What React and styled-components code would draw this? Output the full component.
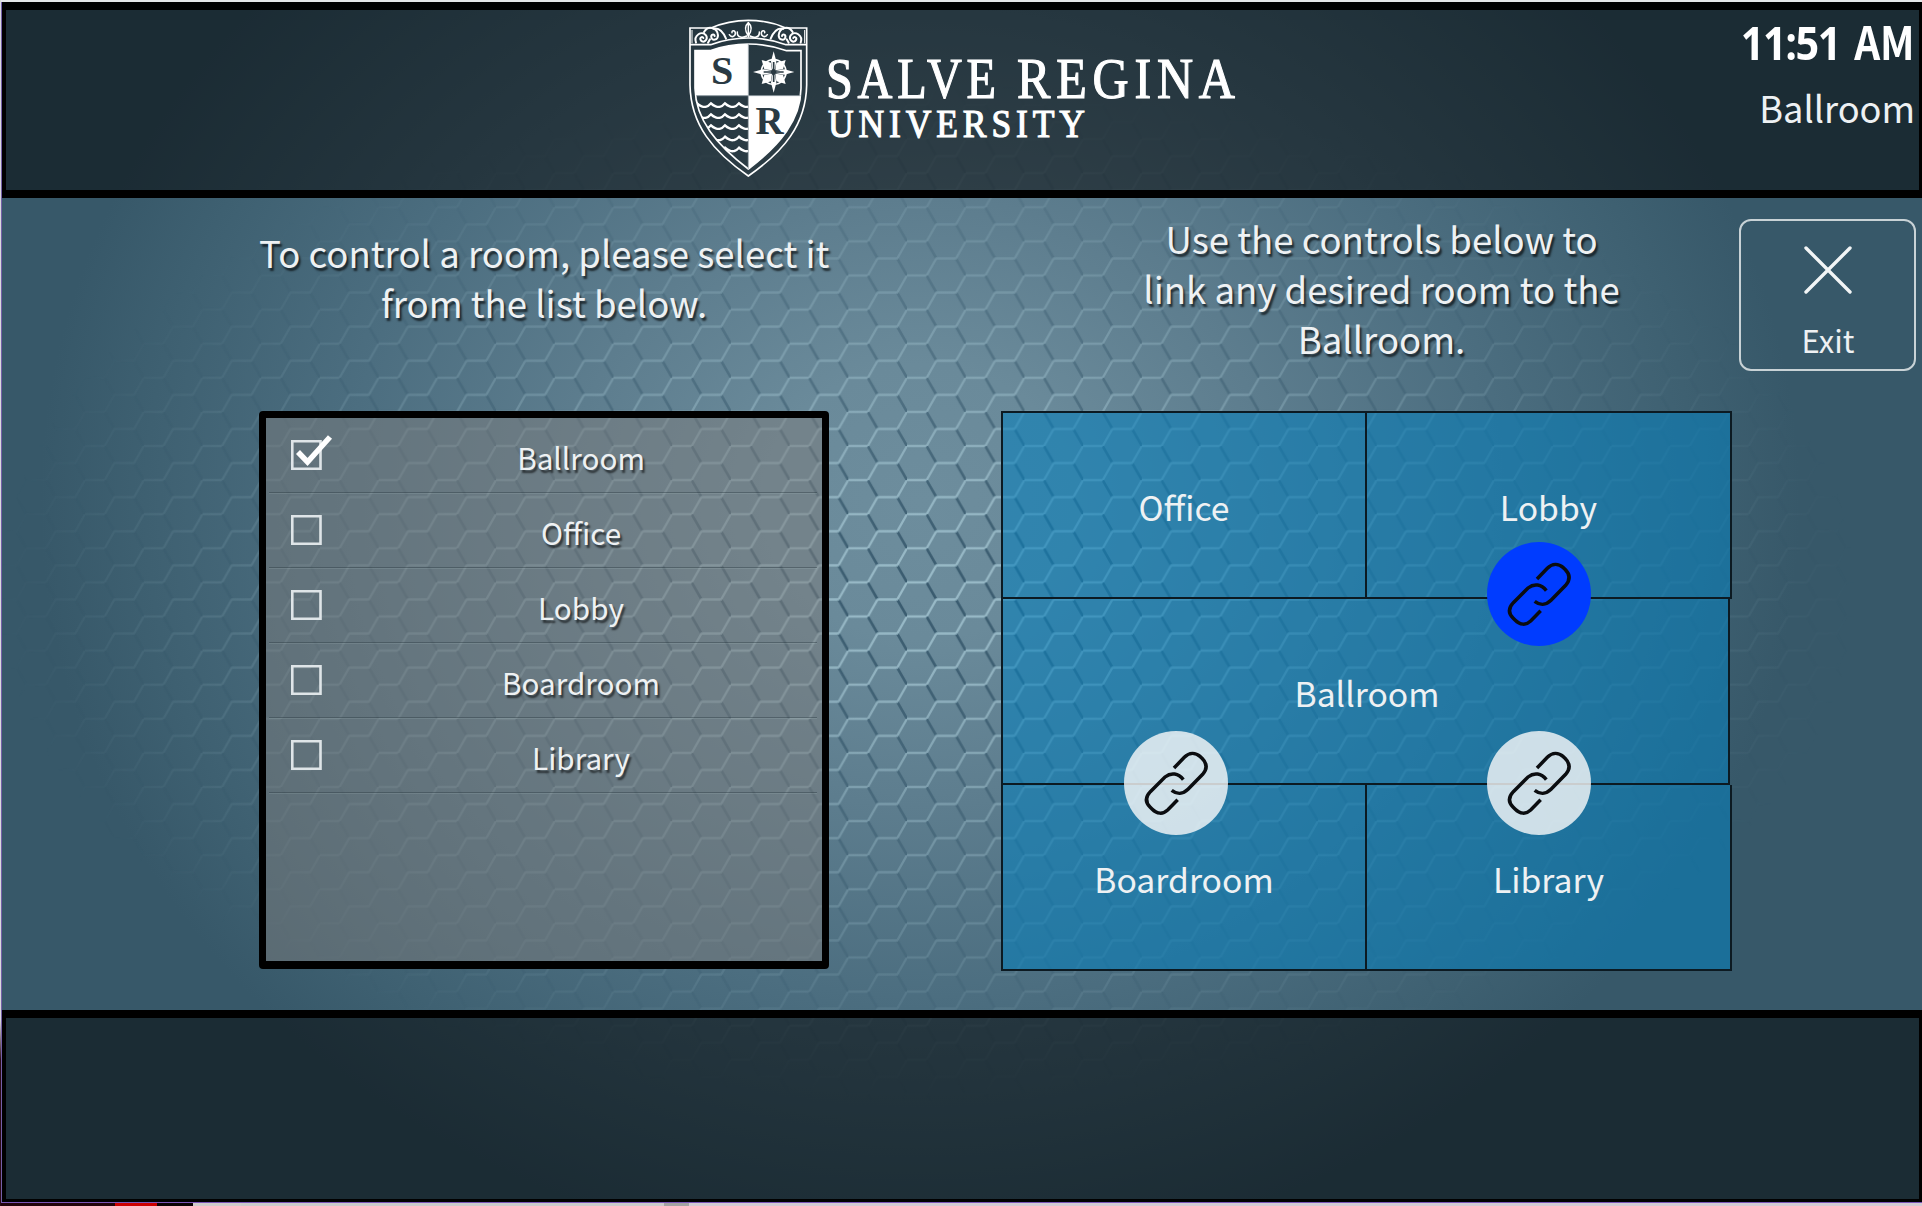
import React from "react";
import styled, { createGlobalStyle, css } from "styled-components";

const GlobalStyle = createGlobalStyle`
  * { box-sizing: border-box; }
  html, body { margin: 0; padding: 0; overflow: hidden; background: #d4d4d4; }
  body { font-family: "Noto Sans CJK SC", "Noto Sans", sans-serif; color: #eef1f3; }
`;

const Desktop = styled.div`
  width: 1922px;
  height: 1206px;
  padding-left: 1px;
  display: grid;
  grid-template-rows: 2px 1201px 3px;
  background: linear-gradient(#d9d9dc 0 1020px, #2a0a14 1060px);
`;

const TopEdge = styled.div`
  background: #e4e6e7;
`;

const Screen = styled.div`
  position: relative;
  isolation: isolate;
  display: grid;
  grid-template-rows: 196px 812px 192px;
  border-left: 1px solid #7460a8;
  border-bottom: 1px solid #7a55b8;
  background: radial-gradient(
    ellipse 880px 760px at 918px 500px,
    #6d8d9d 0%,
    #6a8a9a 18%,
    #5d7d8e 40%,
    #4c6e80 65%,
    #3e6071 88%,
    #375869 100%
  );
`;

const Backdrop = styled.svg`
  position: absolute;
  inset: 0;
  z-index: -1;
`;

const bar = css`
  background: rgba(0, 0, 0, 0.5);
  border: solid #000;
`;

const Header = styled.header`
  ${bar}
  border-width: 8px 3px 8px 4px;
  display: grid;
  grid-template-columns: 683px 560px 1fr;
`;

const Footer = styled.footer`
  ${bar}
  border-width: 8px 3px 3px 4px;
`;

const Logo = styled.svg`
  display: block;
  width: 560px;
  height: 180px;
`;

const Status = styled.div`
  display: flex;
  flex-direction: column;
  align-items: flex-end;
  padding: 0 4px 0 0;
  white-space: nowrap;
`;

const Clock = styled.div`
  display: flex;
  align-items: baseline;
  gap: 16px;
  font-size: 46px;
  line-height: 60px;
  font-weight: 700;
  color: #fff;
  transform: scaleX(0.88);
  transform-origin: right center;
`;

const Digits = styled.span`
  font-family: "Open Sans", "Noto Sans", sans-serif;
  font-size: 47px;
  letter-spacing: -1.6px;
`;

const RoomName = styled.div`
  margin-top: 5px;
  font-size: 36.2px;
  line-height: 60px;
`;

const Main = styled.main`
  display: flex;
  align-items: flex-start;
  padding-left: 257px;
`;

const Column = styled.section`
  width: ${(p) => p.$width}px;
  margin-right: ${(p) => p.$after}px;
  flex: none;
`;

const Instructions = styled.p`
  margin: 0;
  height: 213px;
  padding-top: ${(p) => p.$top}px;
  padding-left: ${(p) => p.$indent || 0}px;
  font-size: 36.6px;
  line-height: 50.3px;
  text-align: center;
  white-space: nowrap;
  text-shadow: 2px 3px 2px rgba(0, 0, 0, 0.65);
`;

const RoomList = styled.ul`
  list-style: none;
  margin: 0;
  padding: 0 5px 0 3px;
  height: 558px;
  border: 7px solid #000;
  border-bottom-width: 8px;
  border-radius: 4px;
  background: rgba(124, 124, 124, 0.5);
  background-clip: padding-box;
`;

const RoomRow = styled.li`
  height: 75px;
  display: flex;
  padding: 19px 0 0 22px;
  border-bottom: 1px solid rgba(40, 55, 62, 0.4);
  box-shadow: 0 1px 0 rgba(190, 210, 215, 0.14);
`;

const CheckIcon = styled.svg`
  flex: none;
  width: 44px;
  height: 36px;
  margin-top: -2px;
`;

const RoomLabel = styled.span`
  flex: 1;
  padding-left: 10px;
  font-size: 29.7px;
  line-height: 42px;
  text-align: center;
  text-shadow: 2px 3px 2px rgba(0, 0, 0, 0.6);
`;

const FloorPlan = styled.div`
  position: relative;
  display: grid;
  grid-template-columns: 366px 365px;
  grid-template-rows: 188px 186px 186px;
`;

const Tile = styled.div`
  grid-column: ${(p) => (p.$wide ? "1 / 3" : "auto")};
  margin-right: ${(p) => (p.$wide ? 2 : 0)}px;
  border: solid #0c1a22;
  border-width: ${(p) => (p.$top ? 2 : 0)}px 2px 2px ${(p) => (p.$left ? 2 : 0)}px;
  background: rgba(7, 127, 188, 0.58);
  display: flex;
  align-items: center;
  justify-content: center;
  padding-top: 3px;
  padding-left: ${(p) => (p.$wide ? 3 : 0)}px;
  font-size: 33.7px;
  line-height: 50px;
`;

const LinkButton = styled.button`
  position: absolute;
  left: ${(p) => p.$x - 52}px;
  top: ${(p) => p.$y - 52}px;
  width: 104px;
  height: 104px;
  padding: 0;
  border: 0;
  border-radius: 50%;
  background: ${(p) => (p.$active ? "#003cff" : "rgba(250, 250, 250, 0.8)")};

  svg { display: block; }
`;

const ExitButton = styled.button`
  width: 177px;
  height: 152px;
  margin: 21px 0 0 7px;
  padding: 23px 0 0 1px;
  flex: none;
  display: flex;
  flex-direction: column;
  align-items: center;
  border: 2px solid #c8d2d6;
  border-radius: 12px;
  background: none;
  color: #eef1f3;
  font-family: inherit;
  font-size: 31px;
  line-height: 44px;

  svg { margin-bottom: 22px; }
`;

const BottomEdge = styled.div`
  display: grid;
  grid-template-columns: 114px 42px 36px 48px 423px 25px 1fr;
`;

const Swatch = styled.span`
  background: ${(p) => p.$color};
`;

const S = 19.57;
const H = 17.05;

function HexBackdrop() {
  const d = (...pts) => pts.map((p, i) => `${i ? "L" : "M"}${p[0] * S},${p[1] * H}`).join("");
  return (
    <Backdrop width="1920" height="1200">
      <defs>
        <pattern id="hex" width={3 * S} height={2 * H} patternUnits="userSpaceOnUse" x="846.3" y="444">
          <g fill="none">
            <path d={d([1, 0], [1.5, 1]) + d([2.5, 1], [3, 2])} stroke="#23465c" strokeOpacity=".7" strokeWidth="2.6" />
            <path
              d={d([0, 0], [1, 0]) + d([0, 2], [1, 2]) + d([1, 2], [1.5, 1], [2.5, 1], [3, 0])}
              stroke="#b0d2de"
              strokeOpacity=".68"
              strokeWidth="2.3"
            />
          </g>
        </pattern>
        <radialGradient id="fade" gradientUnits="userSpaceOnUse" cx="0" cy="0" r="1" gradientTransform="translate(925 590) scale(930 510)">
          <stop offset="0" stopColor="#fff" />
          <stop offset=".18" stopColor="#fff" stopOpacity=".85" />
          <stop offset=".45" stopColor="#fff" stopOpacity=".48" />
          <stop offset=".75" stopColor="#fff" stopOpacity=".2" />
          <stop offset="1" stopColor="#fff" stopOpacity="0" />
        </radialGradient>
        <mask id="glow" maskUnits="userSpaceOnUse" x="0" y="0" width="1920" height="1200">
          <rect width="1920" height="1200" fill="url(#fade)" />
        </mask>
      </defs>
      <rect width="1920" height="1200" fill="url(#hex)" mask="url(#glow)" />
    </Backdrop>
  );
}

function wave(y, x0) {
  let path = `M205,${y + 6}`;
  for (let x = 205; x > x0; x -= 42) {
    path += `q-6,2 -14,-1 q-8,-3 -14,-9 q-8,9 -14,10`;
  }
  return path;
}

function Shield() {
  const inner = "M45,122H90Q145,102 205,102Q265,102 320,122H363V235C362,330 300,405 205,477C110,405 47,330 45,235Z";
  return (
    <svg x="-3" y="0" width="140" height="180" viewBox="0 0 420 540">
      <defs>
        <clipPath id="innerShield"><path d={inner} /></clipPath>
      </defs>
      <g fill="none" stroke="#fff" strokeWidth="5">
        <path d="M30,54H93Q145,31 205,31Q265,31 317,54H380V225C378,345 310,425 205,498C100,425 32,345 30,225Z" />
        <path d="M30,104H92Q145,84 205,84Q265,84 318,104H380" />
        <path d="M36,60V100M374,60V100" strokeWidth="3" />
        <path d={inner} strokeWidth="5" />
      </g>
      <g fill="none" stroke="#fff" strokeWidth="6" strokeLinecap="round">
        {[1, -1].map((k) => (
          <g key={k} transform={k === 1 ? undefined : "translate(410 0) scale(-1 1)"}>
            <path d="M48,98C40,76 66,60 78,76C86,90 68,102 62,90C58,82 68,78 70,84" />
            <path d="M72,66C84,44 112,52 114,76C114,92 96,92 94,82C92,74 102,70 104,78" />
            <path d="M100,56C118,52 130,66 138,86M84,98L90,88" />
            <path d="M148,74C154,84 166,80 166,70C166,60 154,60 156,68M172,66C170,84 190,84 200,78" strokeWidth="4.5" />
          </g>
        ))}
        <path d="M205,38C194,48 194,62 205,78C216,62 216,48 205,38ZM205,42V80" strokeWidth="4.5" />
      </g>
      <g clipPath="url(#innerShield)">
        <rect x="40" y="90" width="165" height="166" fill="#fff" />
        <rect x="205" y="258" width="170" height="230" fill="#fff" />
        <g fill="none" stroke="#fff" strokeWidth="7">
          {[284, 317, 350, 384, 417].map((y) => (
            <path key={y} d={wave(y, 40)} />
          ))}
        </g>
      </g>
      <path d="M205,100V478M48,257H362" stroke="#aab3b8" strokeWidth="2.5" />
      <g transform="translate(281 186)">
        <circle r="37" fill="none" stroke="#fff" strokeWidth="5" />
        <g fill="#fff">
          <path d="M0,-62L8,-32L4,-8H-4L-8,-32ZM0,62L8,32L4,8H-4L-8,32ZM62,0L32,8L8,4V-4L32,-8ZM-62,0L-32,8L-8,4V-4L-32,-8Z" />
          <path d="M36,-36L28,-8L5,-5L8,-28ZM36,36L28,8L5,5L8,28ZM-36,36L-28,8L-5,5L-8,28ZM-36,-36L-28,-8L-5,-5L-8,-28Z" />
        </g>
        <path d="M0,-30V30M-30,0H30" stroke="#2a3a43" strokeWidth="5" />
      </g>
    </svg>
  );
}

function Wordmark({ x, y, size, width, squeeze, children }) {
  return (
    <text
      transform={`translate(${x} ${y}) scale(${squeeze} 1)`}
      fontSize={size}
      textLength={width / squeeze}
      lengthAdjust="spacing"
    >
      {children}
    </text>
  );
}

function UniversityLogo() {
  return (
    <Logo viewBox="0 0 560 180">
      <svg x="-6" y="0" width="560" height="180" overflow="visible">
        <Shield />
        <g fontFamily="Liberation Serif, serif" fontWeight="700" fill="#2a3a43">
          <text x="28" y="74" fontSize="40">S</text>
          <text x="72.5" y="124" fontSize="39">R</text>
        </g>
        <g fontFamily="Liberation Serif, serif" fill="#fff" stroke="#fff" strokeWidth="1.2">
          <Wordmark x={143} y={87.5} size={57.5} width={170} squeeze={0.84}>SALVE</Wordmark>
          <Wordmark x={334} y={87.5} size={57.5} width={218} squeeze={0.87}>REGINA</Wordmark>
          <Wordmark x={145} y={127} size={39.5} width={257} squeeze={0.9}>UNIVERSITY</Wordmark>
        </g>
      </svg>
    </Logo>
  );
}

function Checkbox({ checked }) {
  return (
    <CheckIcon viewBox="0 0 44 36" fill="none">
      <path
        d={checked ? "M29.5,18V33.7H1.3V6.3H25" : "M1.3,6.3H29.5V33.7H1.3Z"}
        stroke="#dfe5e8"
        strokeWidth="2.6"
      />
      {checked && <path d="M25,6.3H29.5V18" stroke="#dfe5e8" strokeWidth="2.6" />}
      {checked && <path d="M7,17L16.5,27L39,2" stroke="#fff" strokeWidth="5.5" />}
    </CheckIcon>
  );
}

function ChainIcon() {
  return (
    <svg width="104" height="104" viewBox="112 126 312 312" fill="none" stroke="#0b0d10" strokeWidth="10.5" strokeLinecap="butt">
      <path d="M262,237L293,205C308,190 326,190 341,203L346,208C361,223 363,239 348,256L304,301C289,316 270,316 255,304" />
      <path d="M290,272C275,253 254,249 235,264L191,308C176,324 176,340 190,354L196,360C211,375 228,377 243,363L273,332" />
    </svg>
  );
}

const rooms = ["Ballroom", "Office", "Lobby", "Boardroom", "Library"];

const tiles = [
  { name: "Office", top: true, left: true },
  { name: "Lobby", top: true },
  { name: "Ballroom", wide: true, left: true },
  { name: "Boardroom", left: true },
  { name: "Library" },
];

const links = [
  { room: "Lobby", x: 538.4, y: 183, active: true },
  { room: "Boardroom", x: 175.4, y: 372.4 },
  { room: "Library", x: 538.4, y: 372.4 },
];

export default function App() {
  return (
    <Desktop>
      <GlobalStyle />
      <TopEdge />
      <Screen>
        <HexBackdrop />
        <Header>
          <span />
          <UniversityLogo />
          <Status>
            <Clock><Digits>11:51</Digits> AM</Clock>
            <RoomName>Ballroom</RoomName>
          </Status>
        </Header>
        <Main>
          <Column $width={570} $after={172}>
            <Instructions $top={29.5}>
              To control a room, please select it<br />from the list below.
            </Instructions>
            <RoomList>
              {rooms.map((name, i) => (
                <RoomRow key={name}>
                  <Checkbox checked={i === 0} />
                  <RoomLabel>{name}</RoomLabel>
                </RoomRow>
              ))}
            </RoomList>
          </Column>
          <Column $width={731} $after={0}>
            <Instructions $top={15.5} $indent={30}>
              Use the controls below to<br />link any desired room to the<br />Ballroom.
            </Instructions>
            <FloorPlan>
              {tiles.map((t) => (
                <Tile key={t.name} $wide={t.wide} $top={t.top} $left={t.left}>{t.name}</Tile>
              ))}
              {links.map((l) => (
                <LinkButton key={l.room} $x={l.x} $y={l.y} $active={l.active} aria-label={`Link ${l.room}`}>
                  <ChainIcon />
                </LinkButton>
              ))}
            </FloorPlan>
          </Column>
          <ExitButton>
            <svg width="52" height="52" viewBox="0 0 52 52" stroke="#f2f5f6" strokeWidth="3.4" strokeLinecap="round">
              <path d="M4,4L48,48M48,4L4,48" />
            </svg>
            Exit
          </ExitButton>
        </Main>
        <Footer />
      </Screen>
      <BottomEdge>
        <Swatch $color="#22040a" />
        <Swatch $color="#cc0000" />
        <Swatch $color="#0a0204" />
        <Swatch $color="#d0cccb" />
        <Swatch $color="#cbcbcb" />
        <Swatch $color="#a3a3a3" />
        <Swatch $color="#d3cbd3" />
      </BottomEdge>
    </Desktop>
  );
}
